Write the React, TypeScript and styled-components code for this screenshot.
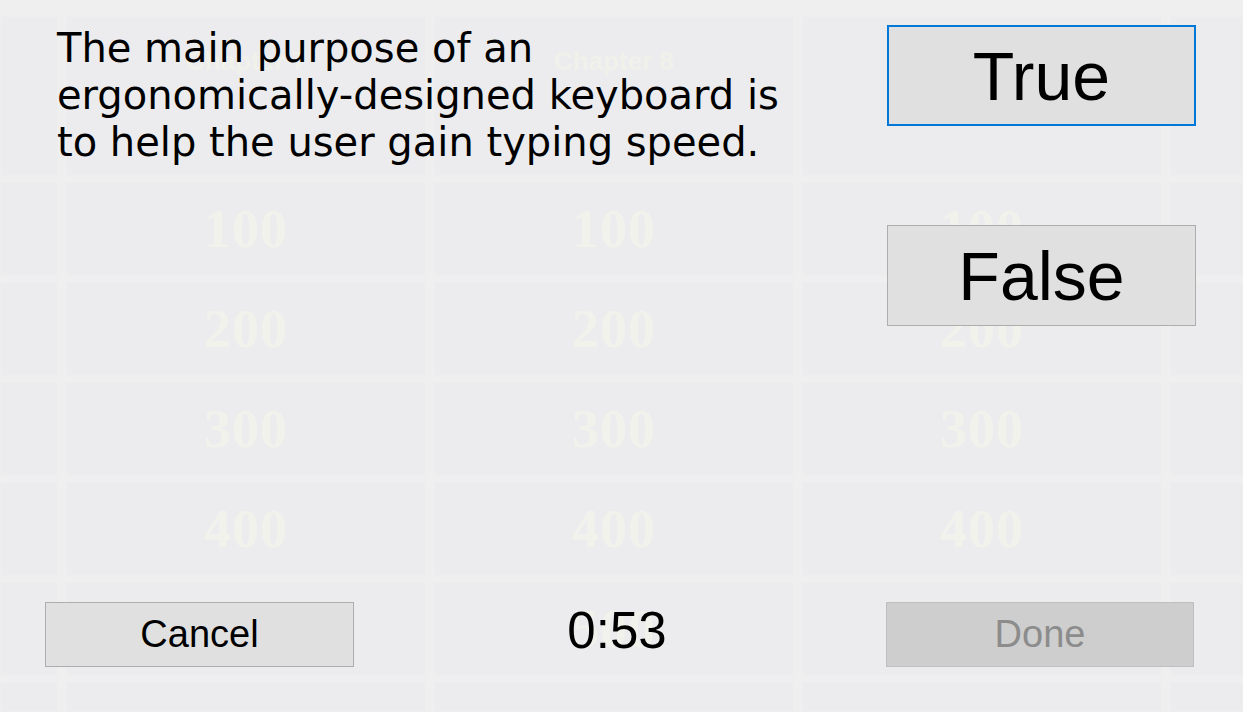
import React from 'react';
import styled, { createGlobalStyle } from 'styled-components';

const GlobalStyle = createGlobalStyle`
  html, body {
    margin: 0;
    padding: 0;
    width: 1243px;
    height: 712px;
    overflow: hidden;
    background: #f0f0f0;
  }
  * {
    box-sizing: border-box;
  }
`;

const Screen = styled.div`
  position: relative;
  width: 1243px;
  height: 712px;
  overflow: hidden;
`;

// faint game board that shows through the question form
const Board = styled.div`
  display: grid;
  grid-template-columns: 58px repeat(3, 360px) 1fr;
  grid-template-rows: 160px repeat(5, 94px) 1fr;
  column-gap: 8px;
  row-gap: 6px;
  padding-top: 16px;
  width: 100%;
  height: 100%;
  background: #efeff0;
`;

const Cell = styled.div<{ $header?: boolean }>`
  display: flex;
  justify-content: center;
  align-items: ${(props) => (props.$header ? 'flex-start' : 'center')};
  padding-top: ${(props) => (props.$header ? '30px' : '0')};
  background: #ececee;
  box-shadow: inset 0 0 0 1px #eeeeef;
  overflow: hidden;
`;

const Category = styled.span`
  font-family: 'Liberation Sans', Arial, sans-serif;
  font-weight: bold;
  font-size: 26px;
  color: #f1f1eb;
`;

const Points = styled.span`
  font-family: 'Liberation Serif', 'Times New Roman', serif;
  font-weight: bold;
  font-size: 54px;
  letter-spacing: 1px;
  color: #f2f2ec;
`;

const Form = styled.div`
  position: absolute;
  inset: 0;
  display: flex;
  flex-direction: column;
  justify-content: space-between;
`;

const TopRow = styled.div`
  display: flex;
  justify-content: space-between;
  padding: 25px 47px 0 57px;
`;

const Question = styled.p`
  margin: 0;
  width: 760px;
  font-family: 'DejaVu Sans', Verdana, sans-serif;
  font-size: 40px;
  line-height: 47px;
  color: #000;
`;

const Answers = styled.div`
  display: flex;
  flex-direction: column;
  gap: 99px;
`;

const Button = styled.button<{ $focused?: boolean }>`
  display: flex;
  justify-content: center;
  align-items: center;
  padding: 0;
  width: 309px;
  font-family: 'Liberation Sans', Arial, sans-serif;
  font-size: 38px;
  color: #000;
  background: rgba(221, 221, 222, 0.86);
  border: ${(props) => (props.$focused ? '2px solid #0078d7' : '1px solid #adadad')};
  border-radius: 0;
  cursor: default;

  &:disabled {
    color: #8c8c8c;
    background: rgba(200, 200, 200, 0.86);
    border-color: #bfbfbf;
  }
`;

const AnswerButton = styled(Button)`
  height: 101px;
  font-size: 68px;
`;

const BottomRow = styled.div`
  display: grid;
  grid-template-columns: 309px 1fr 308px;
  align-items: center;
  padding: 0 49px 44px 45px;
`;

const FooterButton = styled(Button)`
  height: 65px;
  width: 100%;
`;

const Timer = styled.span`
  justify-self: center;
  padding-bottom: 8px;
  margin-left: -6px;
  font-family: 'Liberation Sans', Arial, sans-serif;
  font-size: 51px;
  color: #000;
`;

const categories = ['', 'Chapter 7', 'Chapter 8', 'Chapter 9', ''];
const values = [100, 200, 300, 400, 500, 600];

const App: React.FC = () => {
  return (
    <>
      <GlobalStyle />
      <Screen>
        <Board>
          {categories.map((name, i) => (
            <Cell $header key={`head-${i}`}>
              {name && <Category>{name}</Category>}
            </Cell>
          ))}
          {values.map((value) =>
            categories.map((name, i) => (
              <Cell key={`cell-${value}-${i}`}>
                {name && value < 600 && <Points>{value}</Points>}
              </Cell>
            ))
          )}
        </Board>
        <Form>
          <TopRow>
            <Question>
              The main purpose of an ergonomically-designed keyboard is to help the user gain typing
              speed.
            </Question>
            <Answers>
              <AnswerButton $focused>True</AnswerButton>
              <AnswerButton>False</AnswerButton>
            </Answers>
          </TopRow>
          <BottomRow>
            <FooterButton>Cancel</FooterButton>
            <Timer>0:53</Timer>
            <FooterButton disabled>Done</FooterButton>
          </BottomRow>
        </Form>
      </Screen>
    </>
  );
};

export default App;
